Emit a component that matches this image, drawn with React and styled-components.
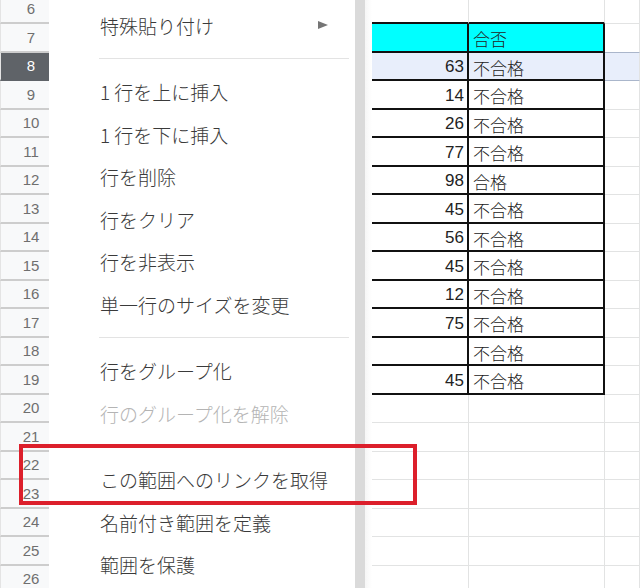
import React from "react";
import styled, { createGlobalStyle, css } from "styled-components";

const GlobalStyle = createGlobalStyle`
    html, body {
        margin: 0;
        padding: 0;
        background: #ffffff;
    }
`;

const ROW_H = 28.5;

const rows = [
    { n: 6 },
    { n: 7, head: true, b: "合否" },
    { n: 8, a: "63", b: "不合格", selected: true },
    { n: 9, a: "14", b: "不合格" },
    { n: 10, a: "26", b: "不合格" },
    { n: 11, a: "77", b: "不合格" },
    { n: 12, a: "98", b: "合格" },
    { n: 13, a: "45", b: "不合格" },
    { n: 14, a: "56", b: "不合格" },
    { n: 15, a: "45", b: "不合格" },
    { n: 16, a: "12", b: "不合格" },
    { n: 17, a: "75", b: "不合格" },
    { n: 18, a: "", b: "不合格" },
    { n: 19, a: "45", b: "不合格" },
    { n: 20 },
    { n: 21 },
    { n: 22 },
    { n: 23 },
    { n: 24 },
    { n: 25 },
    { n: 26 },
];

const menu = [
    { label: "特殊貼り付け", sub: true },
    { sep: true },
    { label: "1 行を上に挿入" },
    { label: "1 行を下に挿入" },
    { label: "行を削除" },
    { label: "行をクリア" },
    { label: "行を非表示" },
    { label: "単一行のサイズを変更" },
    { sep: true },
    { label: "行をグループ化" },
    { label: "行のグループ化を解除", disabled: true },
    { sep: true },
    { label: "この範囲へのリンクを取得" },
    { label: "名前付き範囲を定義" },
    { label: "範囲を保護" },
];

const inTable = (n) => n >= 7 && n <= 19;

export default function App() {
    return (
        <Screen>
            <GlobalStyle />
            <Sheet>
                {rows.map((r) => {
                    const table = inTable(r.n);
                    const edge = table || r.n === 6 ? "thick" : "thin";
                    const bg = r.head ? "#00ffff" : r.selected ? "#e8eefb" : "#ffffff";
                    return (
                        <React.Fragment key={r.n}>
                            <RowHeader $active={r.selected}>{r.n}</RowHeader>
                            <Cell $bg={r.selected ? "#e8eefb" : "#ffffff"} />
                            <Cell $bg={bg} $bottom={edge} $right={table ? "thick" : "thin"} $align="right">
                                {r.a}
                            </Cell>
                            <Cell $bg={bg} $bottom={edge} $right={table ? "thick" : "thin"}>
                                {r.b}
                            </Cell>
                            <Cell
                                $bg={r.selected ? "#e8eefb" : "#ffffff"}
                                $bottom={r.n === 7 || r.selected ? "sel" : "thin"}
                            />
                        </React.Fragment>
                    );
                })}
            </Sheet>

            <Menu>
                <MenuList>
                    {menu.map((m, i) =>
                        m.sep ? (
                            <Separator key={i} />
                        ) : (
                            <MenuItem key={i} $disabled={m.disabled}>
                                <span>{m.label}</span>
                                {m.sub && <Arrow />}
                            </MenuItem>
                        )
                    )}
                </MenuList>
                <ScrollTrack />
                <MenuEdge />
            </Menu>

            <Highlight />
        </Screen>
    );
}

const Screen = styled.div`
    position: relative;
    width: 640px;
    height: 588px;
    overflow: hidden;
    background: #ffffff;
`;

const Sheet = styled.div`
    display: grid;
    grid-template-columns: 49px 323px 97px 136px 1fr;
    grid-auto-rows: ${ROW_H}px;
    margin-top: -4.5px;
    font-family: "Liberation Sans", "Noto Sans CJK JP", sans-serif;
`;

const RowHeader = styled.div`
    box-sizing: border-box;
    display: flex;
    align-items: center;
    justify-content: center;
    padding-left: 12px;
    font-size: 15px;
    color: #6f6f6f;
    background: #f8f9fa;
    border-bottom: 2px solid #cdcdcd;
    border-left: 1px solid #e4e4e4;

    ${(props) => props.$active && css`
        background: #5f6368;
        color: #ffffff;
        border-bottom-color: #5f6368;
    `}
`;

const borders = {
    thick: "2px solid #111111",
    thin: "1px solid #e2e3e3",
    sel: "1px solid #aab6cb",
};

const Cell = styled.div`
    box-sizing: border-box;
    display: flex;
    align-items: center;
    justify-content: ${(props) => (props.$align === "right" ? "flex-end" : "flex-start")};
    padding: 3px 3px 0 4px;
    font-size: 17px;
    font-weight: 300;
    color: #222222;
    white-space: nowrap;
    overflow: hidden;
    background: ${(props) => props.$bg};
    border-bottom: ${(props) => borders[props.$bottom || "thin"]};
    border-right: ${(props) => borders[props.$right || "thin"]};
`;

const Menu = styled.div`
    position: absolute;
    top: 0;
    left: 49px;
    width: 323px;
    height: 100%;
    display: flex;
    background: #ffffff;
`;

const MenuList = styled.div`
    width: 306px;
    padding-top: 3.75px;
    font-family: "Noto Sans CJK JP", "Liberation Sans", sans-serif;
`;

const MenuItem = styled.div`
    height: 42.5px;
    display: flex;
    align-items: center;
    justify-content: space-between;
    padding: 0 27px 0 51px;
    font-size: 19px;
    font-weight: 300;
    color: ${(props) => (props.$disabled ? "#b4b4b4" : "#3a3a3a")};
    white-space: nowrap;
`;

const Arrow = styled.span`
    width: 0;
    height: 0;
    border-left: 10px solid #757575;
    border-top: 4.5px solid transparent;
    border-bottom: 4.5px solid transparent;
`;

const Separator = styled.div`
    height: 1px;
    margin: 11.5px 6px 11.5px 50px;
    background: #e3e3e3;
`;

const ScrollTrack = styled.div`
    width: 10px;
    background: #dadada;
`;

const MenuEdge = styled.div`
    width: 7px;
    background: linear-gradient(to right, #f6f6f6, #ffffff);
`;

const Highlight = styled.div`
    position: absolute;
    left: 19px;
    top: 444px;
    width: 398px;
    height: 61px;
    box-sizing: border-box;
    border: 4px solid #dc1f2b;
    pointer-events: none;
`;
